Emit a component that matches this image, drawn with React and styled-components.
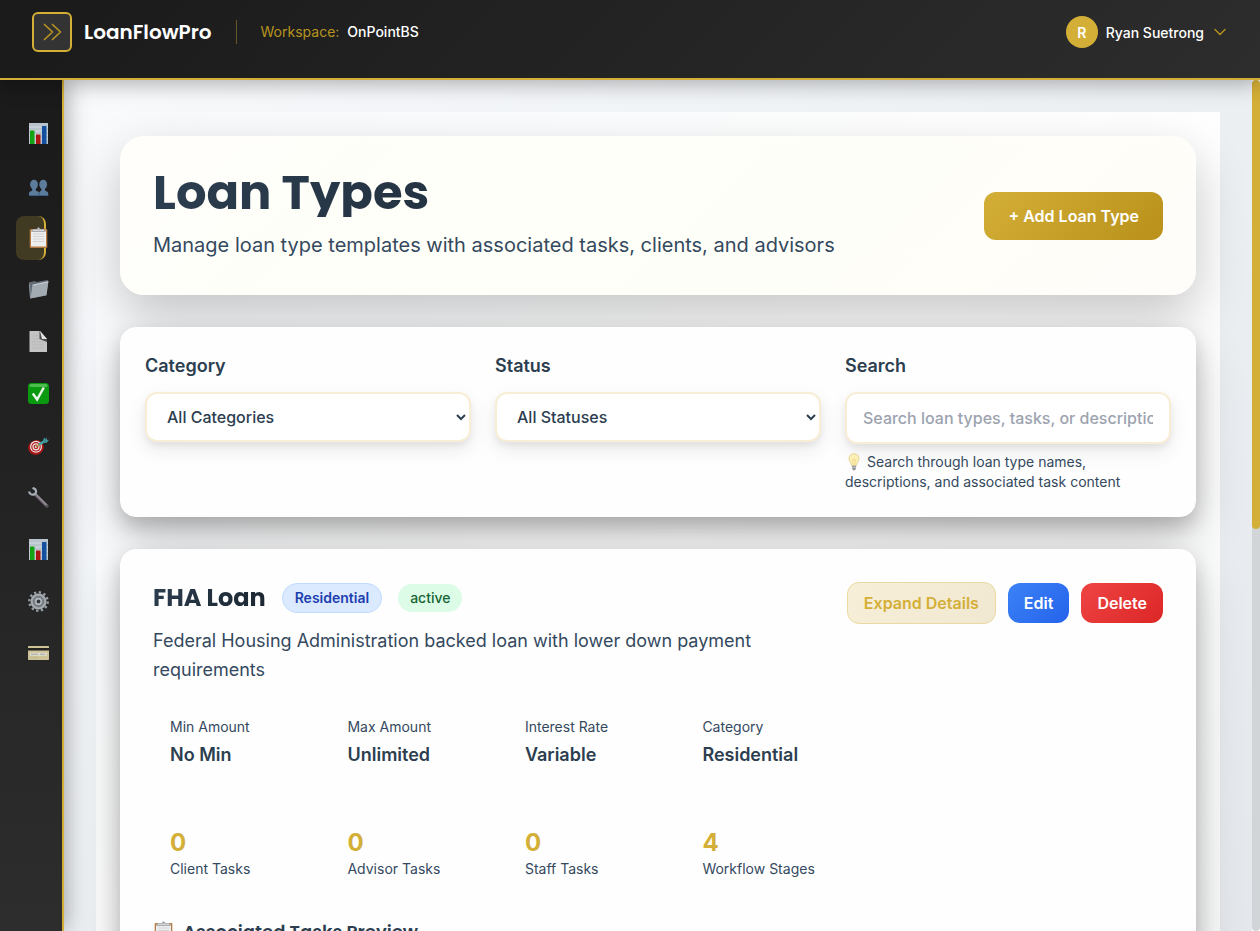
import React from "react";
import styled, { createGlobalStyle, css } from "styled-components";

const gold = "#d4af37";
const navy = "#2c3e50";
const slate = "#34495e";
const body = `Inter, "Liberation Sans", sans-serif`;
const display = `Poppins, Inter, "Liberation Sans", sans-serif`;

const GlobalStyle = createGlobalStyle`
  *, *::before, *::after { box-sizing: border-box; }
  body { margin: 0; font-family: ${body}; color: ${navy}; }
  button, input, select { font-family: inherit; }
  h1, h2, h3, p, dl, dd, ul { margin: 0; padding: 0; }
`;

const Shell = styled.div`
  display: flex;
  flex-direction: column;
  height: 100vh;
  overflow: hidden;
`;

const TopBar = styled.header`
  flex: none;
  display: flex;
  align-items: flex-start;
  justify-content: space-between;
  height: 80px;
  padding: 12px 32px;
  background: linear-gradient(135deg, #1a1a1a 0%, #2d2d2d 100%);
  border-bottom: 2px solid ${gold};
  box-shadow: 0 4px 20px rgba(0, 0, 0, 0.3);
  z-index: 3;
`;

const BarGroup = styled.div`
  display: flex;
  align-items: center;
  height: 40px;
`;

const MenuButton = styled.button`
  display: grid;
  place-items: center;
  width: 40px;
  height: 40px;
  padding: 0;
  border: 2px solid ${gold};
  border-radius: 6px;
  background: #333;
`;

const Brand = styled.span`
  margin-left: 12px;
  font: 600 20px/28px ${display};
  color: #fff;
`;

const Divider = styled.span`
  width: 1px;
  height: 24px;
  margin: 0 24px;
  background: rgba(212, 175, 55, 0.4);
`;

const Workspace = styled.span`
  display: flex;
  gap: 8px;
  font-size: 14px;
  line-height: 20px;
  font-weight: 400;
  color: #b8941f;
`;

const WorkspaceName = styled.strong`
  font-weight: 500;
  color: #fff;
`;

const UserButton = styled.button`
  display: flex;
  align-items: center;
  gap: 8px;
  padding: 0;
  border: 0;
  background: none;
  font-size: 14px;
  font-weight: 500;
  color: #fff;
`;

const Avatar = styled.span`
  display: grid;
  place-items: center;
  width: 32px;
  height: 32px;
  border-radius: 50%;
  background: ${gold};
  font-weight: 600;
`;

const Body = styled.div`
  flex: 1;
  display: flex;
  min-height: 0;
`;

const Sidebar = styled.nav`
  flex: none;
  display: flex;
  flex-direction: column;
  gap: 8px;
  width: 64px;
  padding: 32px 16px;
  background: linear-gradient(180deg, #1a1a1a 0%, #2d2d2d 100%);
  border-right: 2px solid ${gold};
  box-shadow: 4px 0 20px rgba(0, 0, 0, 0.3);
  z-index: 2;
`;

const NavLink = styled.a`
  display: flex;
  align-items: center;
  height: 44px;
  padding-left: 12px;
  border-radius: 8px;
  ${(p) =>
    p.$active &&
    css`
      background: rgba(212, 175, 55, 0.2);
      border-right: 2px solid ${gold};
    `}
  svg { flex: none; }
`;

const Main = styled.main`
  flex: 1;
  min-width: 0;
  overflow-y: auto;
  scrollbar-width: none;
  padding: 32px;
  background: linear-gradient(135deg, #f8fafc 0%, #e4e8ec 100%);
`;

const ScrollTrack = styled.div`
  flex: none;
  width: 8px;
  background: #d2d5d8;
  border-radius: 4px;
`;

const ScrollThumb = styled.div`
  height: 52.75%;
  border-radius: 4px;
  background: ${gold};
`;

const Panel = styled.div`
  display: flex;
  flex-direction: column;
  gap: 32px;
  padding: 24px;
  background: linear-gradient(135deg, #f8fafc 0%, #ffffff 50%, #f8faf9 100%);
`;

const Card = styled.section`
  padding: ${(p) => p.$pad || 32}px;
  border: 1px solid #fff;
  border-radius: 16px;
  background: #fefefe;
  box-shadow: 0 10px 20px rgba(0, 0, 0, 0.2), 0 20px 50px rgba(0, 0, 0, 0.2);
`;

const Hero = styled(Card)`
  display: flex;
  align-items: center;
  justify-content: space-between;
  border-color: #fffef9;
  border-radius: 24px;
  background: linear-gradient(135deg, #fffefb 0%, #fefff8 40%, #fffdf9 100%);
  box-shadow: 0 20px 50px rgba(0, 0, 0, 0.22);
`;

const gradientText = css`
  background: linear-gradient(135deg, #2c3e50 0%, #1a252f 100%);
  background-clip: text;
  -webkit-background-clip: text;
  color: transparent;
`;

const Title = styled.h1`
  margin-bottom: 12px;
  font: 700 48px/48px ${display};
  ${gradientText}
`;

const Subtitle = styled.p`
  font-size: 20px;
  line-height: 33px;
  color: ${slate};
`;

const Button = styled.button`
  height: ${(p) => (p.$large ? 48 : 40)}px;
  padding: 0 ${(p) => (p.$large ? 24 : 16)}px;
  border: 0;
  border-radius: 12px;
  font-size: 16px;
  font-weight: 600;
  white-space: nowrap;
  color: #fff;
  background: ${(p) => p.$bg};
`;

const OutlineButton = styled(Button)`
  height: 42px;
  border: 1px solid #ead9a0;
  color: ${gold};
`;

const Filters = styled.div`
  display: grid;
  grid-template-columns: repeat(3, 1fr);
  gap: 24px;
`;

const Field = styled.div`
  display: flex;
  flex-direction: column;
`;

const Label = styled.label`
  margin-bottom: 12px;
  font-size: 18px;
  line-height: 28px;
  font-weight: 600;
`;

const control = css`
  width: 100%;
  border: 2px solid #f8eed6;
  border-radius: 12px;
  background: #fff;
  font-size: 16px;
  font-weight: 500;
  color: ${navy};
  box-shadow: 0 4px 6px rgba(0, 0, 0, 0.06), 0 8px 20px rgba(0, 0, 0, 0.08);
`;

const Select = styled.select`
  ${control}
  height: 50px;
  padding: 0 0 0 16px;
`;

const SearchInput = styled.input`
  ${control}
  height: 52px;
  padding: 0 16px;
  &::placeholder { color: #9ca3af; opacity: 1; }
`;

const Hint = styled.p`
  margin-top: 8px;
  font-size: 14px;
  line-height: 20px;
  color: ${slate};
  svg { vertical-align: -4px; margin-right: 4px; }
`;

const LoanHeader = styled.div`
  display: flex;
  align-items: flex-start;
`;

const LoanInfo = styled.div`
  flex: 1;
  min-width: 0;
`;

const TitleRow = styled.div`
  display: flex;
  align-items: center;
  gap: 16px;
  height: 32px;
`;

const LoanName = styled.h2`
  font: 700 24px/32px ${display};
  ${gradientText}
`;

const Badge = styled.span`
  padding: 4px 12px;
  border-radius: 16px;
  font-size: 14px;
  line-height: 20px;
  font-weight: ${(p) => (p.$tone === "blue" ? 600 : 500)};
  ${(p) =>
    p.$tone === "blue"
      ? css`border: 1px solid #bfdbfe; background: #dbeafe; color: #1e40af;`
      : css`background: #dcfce7; color: #166534;`}
`;

const Description = styled.p`
  margin-top: 12px;
  font-size: 18px;
  line-height: 29px;
  color: ${slate};
`;

const Actions = styled.div`
  flex: none;
  display: flex;
  align-items: center;
  gap: 12px;
`;

const StatGrid = styled.dl`
  display: grid;
  grid-template-columns: repeat(4, 1fr);
  gap: 16px;
  margin-top: ${(p) => p.$top}px;
`;

const Stat = styled.div`
  display: flex;
  flex-direction: ${(p) => (p.$count ? "column-reverse" : "column")};
  padding: 17px;
`;

const StatLabel = styled.dt`
  font-size: 14px;
  line-height: 20px;
  white-space: nowrap;
  color: ${slate};
`;

const StatValue = styled.dd`
  margin-top: 4px;
  font-size: 18px;
  line-height: 28px;
  font-weight: 600;
`;

const StatCount = styled.dd`
  font-size: 24px;
  line-height: 32px;
  font-weight: 700;
  color: ${gold};
`;

const TasksHeading = styled.h3`
  display: flex;
  align-items: center;
  gap: 8px;
  margin-top: 24px;
  font: 600 18px/24px ${display};
`;

const Icon = ({ children, size = 22 }) => (
  <svg width={size} height={size} viewBox="0 0 22 22" aria-hidden="true">
    {children}
  </svg>
);

const ChartIcon = () => (
  <Icon>
    <rect x="1" y="0" width="19" height="21" fill="#b9c3cc" />
    <path d="M1 4h19M1 8h19M1 12h19M1 16h19" stroke="#d5dde3" />
    <rect x="2" y="7.5" width="4.5" height="13.5" fill="#13a313" />
    <rect x="8" y="11.5" width="4.5" height="9.5" fill="#ad1515" />
    <rect x="14" y="3" width="4.5" height="18" fill="#14509f" />
  </Icon>
);

const PeopleIcon = () => (
  <Icon>
    <g fill="#5b7c9b">
      <ellipse cx="6" cy="9.5" rx="3.9" ry="4.8" />
      <path d="M4.2 13h3.6v2.500l3 1.600V21H1v-2.500c0-1.500 1-2 3.200-3z" />
      <ellipse cx="15.2" cy="9.500" rx="3.9" ry="4.8" />
      <path d="M13.400 13H17v2.500c2 1 3.200 1.500 3.200 3V21h-9v-3.900l2.200-1.600z" />
    </g>
    <path d="M1 20.500h19" stroke="#3d6288" />
  </Icon>
);

const ClipboardIcon = ({ size }) => (
  <Icon size={size}>
    <rect x="1.7" y="2" width="17.6" height="19" rx="1" fill="#b47a42" />
    <rect x="3" y="3.5" width="15" height="16" fill="#eeeeef" />
    <path d="M5 7h11M5 9.5h11M5 12h11M5 14.5h11" stroke="#d2d2d4" />
    <path d="M3 5l2-3h3.5l2-2 2 2H16l2 3z" fill="#a9acb0" />
    <path d="M5 3.3h11" stroke="#dfe1e3" />
  </Icon>
);

const FolderIcon = () => (
  <Icon>
    <path d="M1 3.200L7 2l1.400 1L19.500 1l.8 1-2 14.500L2 19.500z" fill="#616a72" />
    <path d="M4.500 5.500L20.500 2l-2 14.300L2.500 19.600z" fill="#a3abb2" />
    <path d="M4.800 6.200L20 3" stroke="#c5cbd0" />
    <path d="M1.400 5l1.200 14" stroke="#8c959d" />
  </Icon>
);

const DocIcon = () => (
  <Icon>
    <path d="M1.5 0h10.5L19 8v13H1.5z" fill="#c4c4c4" />
    <path d="M4 5h7M4 8h7M4 11h12M4 14h12M4 17h12" stroke="#b9b9b9" />
    <path d="M11.500 0L19 8v3l-7.500-3z" fill="#4b4b4b" />
    <path d="M12 0l7 8h-5z" fill="#e4e4e4" />
  </Icon>
);

const CheckIcon = () => (
  <Icon>
    <rect x="0" y="0" width="21" height="21" rx="3.5" fill="#0a9a10" />
    <rect x="1.5" y="1" width="18" height="3" rx="1.5" fill="#4dbd50" />
    <path d="M4.8 10.5l4.3 6L15.8 4.5" fill="none" stroke="#eef5ec" strokeWidth="2.4" />
  </Icon>
);

const DartIcon = () => (
  <Icon>
    <ellipse cx="8" cy="12.500" rx="7.800" ry="7.300" fill="#a61616" transform="rotate(-20 8 12.500)" />
    <circle cx="8" cy="11.800" r="6" fill="#e9e4e2" />
    <circle cx="8" cy="11.800" r="4.800" fill="#b51c1c" />
    <circle cx="8" cy="11.800" r="3.600" fill="#e9e4e2" />
    <circle cx="8" cy="11.800" r="2.400" fill="#b51c1c" />
    <circle cx="8" cy="11.800" r="1.200" fill="#e9e4e2" />
    <path d="M8 11.800l4-3" stroke="#a88f3c" strokeWidth="1.500" />
    <path d="M11 9.500l6.500-3.800" stroke="#42a4a4" strokeWidth="2.600" />
    <path d="M15 6l1-3.500 1.800 1.700L18.500 2l.5 3 2-.2-2.400 3.200-3-.4z" fill="#3d9396" />
  </Icon>
);

const WrenchIcon = () => (
  <Icon>
    <path d="M7.5 7.5L19 19" stroke="#78717a" strokeWidth="3" strokeLinecap="round" />
    <path d="M8 7.3L18.5 17.8" stroke="#aaa3aa" strokeWidth="1" />
    <path d="M1 4.500C2 7.500 4 8.200 6.200 7.400 8.300 6.600 8.600 4 7.200 2.200L4.600.8" fill="none" stroke="#a7afb7" strokeWidth="2.200" />
    <circle cx="19" cy="19" r=".8" fill="#2a2529" />
  </Icon>
);

const GearIcon = () => (
  <Icon>
    <circle cx="10.5" cy="10.5" r="9.2" fill="none" stroke="#98a0a6" strokeWidth="2.4" strokeDasharray="2.3 2.516" />
    <circle cx="10.5" cy="10.5" r="6.4" fill="#7b8288" stroke="#a4abb1" strokeWidth="3.2" />
    <circle cx="10.5" cy="10.5" r="5.3" fill="none" stroke="#666d73" />
    <circle cx="10.5" cy="10.5" r="2.7" fill="#33373a" stroke="#bcc2c7" strokeWidth="1.4" />
  </Icon>
);

const CreditIcon = () => (
  <Icon>
    <rect x="0" y="3" width="21" height="14" rx=".8" fill="#cdc397" />
    <rect x="0" y="5" width="21" height="2.500" fill="#242321" />
    <rect x="2" y="9.500" width="17" height="3.400" fill="#dcdac8" />
    <path d="M3 11.200h7M12 11.200h5" stroke="#a5a9ae" />
    <path d="M2 14.800h8" stroke="#bdb48a" />
  </Icon>
);

const BulbIcon = () => (
  <svg width="18" height="18" viewBox="0 0 18 18" aria-hidden="true">
    <path d="M9 .7c3 0 5 2.1 5 5 0 3.1-2.4 4.2-2.8 7H6.8C6.4 9.900 4 8.800 4 5.700 4 2.800 6 .7 9 .7z" fill="#fbefb5" stroke="#dfcc86" strokeWidth=".8" />
    <path d="M7.500 7l1 5.500M10.500 7l-1 5.500M7.300 6.800l1.700-.7 1.700.7" fill="none" stroke="#ecd27c" strokeWidth=".7" />
    <path d="M6.800 12.700h4.400l-.4 3.600L9 17.700l-1.800-1.400z" fill="#96979b" />
    <path d="M7 14.300h4" stroke="#d2d3d6" strokeWidth=".8" />
  </svg>
);

const navItems = [
  ["Dashboard", ChartIcon],
  ["Clients", PeopleIcon],
  ["Loan Types", ClipboardIcon],
  ["Files", FolderIcon],
  ["Documents", DocIcon],
  ["Tasks", CheckIcon],
  ["Goals", DartIcon],
  ["Tools", WrenchIcon],
  ["Reports", ChartIcon],
  ["Settings", GearIcon],
  ["Billing", CreditIcon],
];

const details = [
  ["Min Amount", "No Min"],
  ["Max Amount", "Unlimited"],
  ["Interest Rate", "Variable"],
  ["Category", "Residential"],
];

const counts = [
  ["Client Tasks", 0],
  ["Advisor Tasks", 0],
  ["Staff Tasks", 0],
  ["Workflow Stages", 4],
];

export default function App() {
  return (
    <Shell>
      <GlobalStyle />
      <TopBar>
        <BarGroup>
          <MenuButton aria-label="Expand menu">
            <svg width="20" height="20" viewBox="0 0 20 20" fill="none" stroke="#b8941f" strokeWidth="1.7" strokeLinecap="round" strokeLinejoin="round" aria-hidden="true">
              <path d="M2.500 2.500L10.500 10l-8 7.500M10.500 2.500l8 7.500-8 7.500" />
            </svg>
          </MenuButton>
          <Brand>LoanFlowPro</Brand>
          <Divider />
          <Workspace>
            Workspace: <WorkspaceName>OnPointBS</WorkspaceName>
          </Workspace>
        </BarGroup>
        <BarGroup>
          <UserButton>
            <Avatar>R</Avatar>
            Ryan Suetrong
            <svg width="16" height="16" viewBox="0 0 16 16" fill="none" stroke="#b8941f" strokeWidth="1.300" strokeLinecap="round" strokeLinejoin="round" aria-hidden="true">
              <path d="M3 5.500l5 5 5-5" />
            </svg>
          </UserButton>
        </BarGroup>
      </TopBar>
      <Body>
        <Sidebar aria-label="Main">
          {navItems.map(([name, NavIcon]) => (
            <NavLink key={name} href="#" aria-label={name} $active={name === "Loan Types"}>
              <NavIcon />
            </NavLink>
          ))}
        </Sidebar>
        <Main>
          <Panel>
            <Hero>
              <div>
                <Title>Loan Types</Title>
                <Subtitle>Manage loan type templates with associated tasks, clients, and advisors</Subtitle>
              </div>
              <Button $large $bg="linear-gradient(135deg, #d4af37, #b8901a)">+ Add Loan Type</Button>
            </Hero>
            <Card $pad={24}>
              <Filters>
                <Field>
                  <Label htmlFor="category">Category</Label>
                  <Select id="category"><option>All Categories</option></Select>
                </Field>
                <Field>
                  <Label htmlFor="status">Status</Label>
                  <Select id="status"><option>All Statuses</option></Select>
                </Field>
                <Field>
                  <Label htmlFor="search">Search</Label>
                  <SearchInput id="search" placeholder="Search loan types, tasks, or descriptions..." />
                  <Hint><BulbIcon />Search through loan type names, descriptions, and associated task content</Hint>
                </Field>
              </Filters>
            </Card>
            <Card>
              <LoanHeader>
                <LoanInfo>
                  <TitleRow>
                    <LoanName>FHA Loan</LoanName>
                    <Badge $tone="blue">Residential</Badge>
                    <Badge $tone="green">active</Badge>
                  </TitleRow>
                  <Description>
                    Federal Housing Administration backed loan with lower down payment requirements
                  </Description>
                  <StatGrid $top={16}>
                    {details.map(([label, value]) => (
                      <Stat key={label}>
                        <StatLabel>{label}</StatLabel>
                        <StatValue>{value}</StatValue>
                      </Stat>
                    ))}
                  </StatGrid>
                  <StatGrid $top={24}>
                    {counts.map(([label, value]) => (
                      <Stat key={label} $count>
                        <StatLabel>{label}</StatLabel>
                        <StatCount>{value}</StatCount>
                      </Stat>
                    ))}
                  </StatGrid>
                </LoanInfo>
                <Actions>
                  <OutlineButton $bg="linear-gradient(135deg, #f7efd7, #f0e8d1)">Expand Details</OutlineButton>
                  <Button $bg="linear-gradient(135deg, #3b82f6, #2563eb)">Edit</Button>
                  <Button $bg="linear-gradient(135deg, #ef4444, #dc2626)">Delete</Button>
                </Actions>
              </LoanHeader>
              <TasksHeading><ClipboardIcon />Associated Tasks Preview</TasksHeading>
            </Card>
          </Panel>
        </Main>
        <ScrollTrack aria-hidden="true"><ScrollThumb /></ScrollTrack>
      </Body>
    </Shell>
  );
}
